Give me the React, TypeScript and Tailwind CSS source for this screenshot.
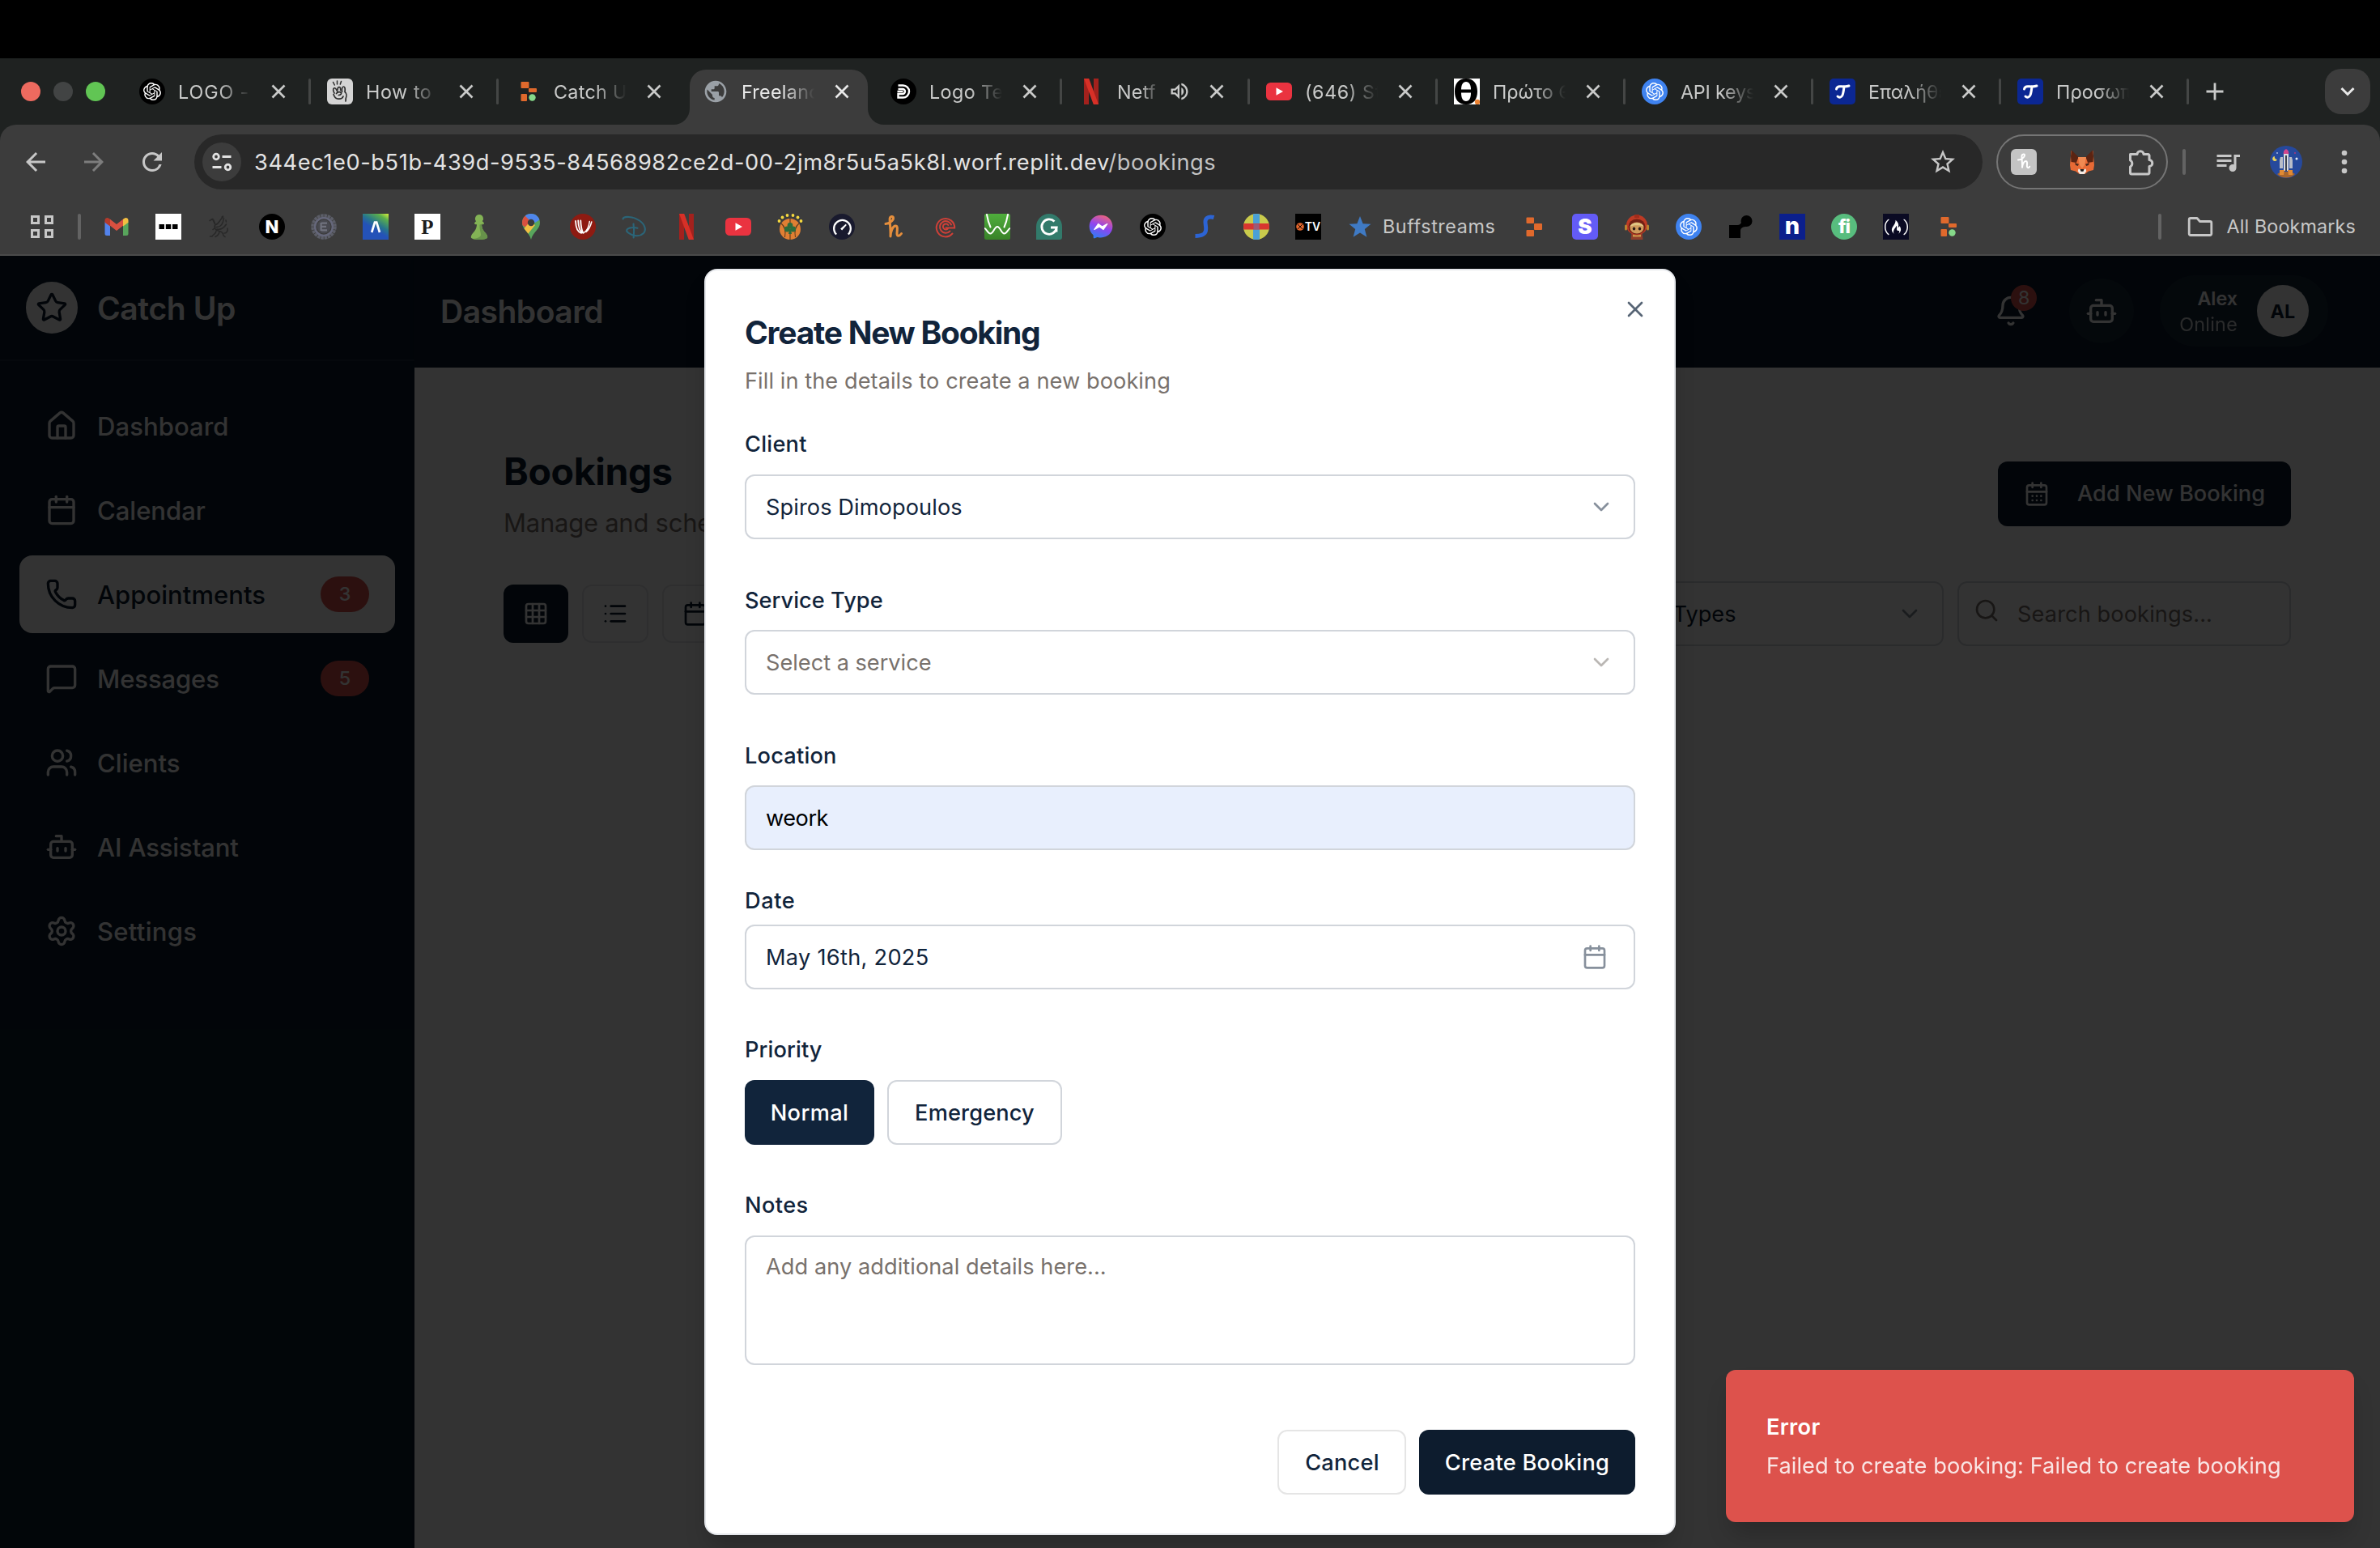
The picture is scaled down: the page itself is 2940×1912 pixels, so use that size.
import React from "react";
import {
  SiOpenai,
  SiSpeedtest,
  SiFreecodecamp,
} from "react-icons/si";
import {
  MdArrowBack,
  MdArrowForward,
  MdRefresh,
  MdStarBorder,
  MdQueueMusic,
  MdPublic,
  MdOutlineVolumeUp,
} from "react-icons/md";
import {
  Bell,
  Bot,
  Calendar,
  CalendarDays,
  ChevronDown,
  Grid3x3,
  House,
  List,
  MessageSquare,
  Phone,
  Search,
  Settings,
  Star,
  Users,
  X,
} from "lucide-react";

type Kids = { children?: React.ReactNode };

/* ---------- favicon building blocks ---------- */

const Svg = ({ children }: Kids) => (
  <svg viewBox="0 0 32 32" className="block size-8 shrink-0">
    {children}
  </svg>
);

const OpenAi = ({ blue = false }: { blue?: boolean }) => (
  <span
    className={
      "flex size-8 shrink-0 items-center justify-center rounded-full text-white " +
      (blue ? "bg-[#3f83f0]" : "bg-black")
    }
  >
    <SiOpenai className="size-[22px]" />
  </span>
);

const Hand = () => (
  <Svg>
    <rect width="32" height="32" rx="6" fill="#d4d4d4" />
    <g fill="none" stroke="#2c2c2c" strokeLinecap="round" strokeLinejoin="round">
      <path d="M7.500 4.500l1.800 3.500M12.500 3v4M17.500 3.500l-1.200 3.500" strokeWidth="1.500" />
      <path
        d="M18.500 16.500c-.5-3 0-6.500 2-6.500 1.800 0 2 3 1.500 6.500 2 1.500 2.500 5 1.200 8L23 28M9 18c-1.500-2.500-2-5.500-.2-6.200 1.500-.5 3 2 4.200 4.700M8 19.500c1 3 2.500 5 5 5.500 3 .6 6-.5 7-3"
        strokeWidth="1.700"
      />
      <path d="M13 14c0-2 .8-3.500 2-3.500s1.800 2 1.800 4M11.500 18.500c1.500-2 4.500-2.500 5.800-1.200 1 1.200-.5 3.200-3 3.200" strokeWidth="1.700" />
    </g>
  </Svg>
);

const ReplitAgent = () => (
  <Svg>
    <g fill="#e0692c">
      <rect x="7.500" y="4" width="10" height="8" rx="1" />
      <rect x="17" y="12" width="10" height="5" rx="1" />
      <rect x="7.500" y="19" width="7.500" height="9" rx="1" />
    </g>
    <circle cx="21.500" cy="23.500" r="4.200" fill="#86d98a" />
  </Svg>
);

const Replit = () => (
  <Svg>
    <g fill="#e0692c">
      <rect x="7.500" y="4.500" width="9.500" height="7.500" rx="1" />
      <rect x="17" y="12" width="10" height="8" rx="1" />
      <rect x="7.500" y="20" width="9.500" height="8" rx="1" />
    </g>
  </Svg>
);

const Globe = () => (
  <span className="flex size-8 shrink-0 items-center justify-center text-[#9aa0a6]">
    <MdPublic className="size-[34px]" />
  </span>
);

const DLogo = () => (
  <Svg>
    <circle cx="16" cy="16" r="16" fill="#000" />
    <g fill="none" stroke="#fff" strokeWidth="2.400">
      <path d="M9.500 8.500h6a7.500 7.500 0 0 1 0 15h-6v-4.500h5.500a3 3 0 0 0 0-6h-5.500" />
      <path d="M8.500 16h7" />
    </g>
  </Svg>
);

const Netflix = () => (
  <Svg>
    <path d="M7 0h6v32H7z" fill="#a3211d" />
    <path d="M19 0h6v32h-6z" fill="#a3211d" />
    <path d="M7 0h6.200L25 32h-6.200z" fill="#d73027" />
  </Svg>
);

const YouTube = () => (
  <Svg>
    <rect y="5" width="32" height="22" rx="5.500" fill="#ea3340" />
    <path d="M12.500 11.200l8.500 4.800-8.500 4.800z" fill="#fff" />
  </Svg>
);

const Theta = () => (
  <Svg>
    <rect width="32" height="32" fill="#fff" />
    <path
      fillRule="evenodd"
      d="M15 0C25 0 29 7 29 16s-4 16-14 16S1 25 1 16 5 0 15 0zm0 4c-4 0-6 4-6 9.500h12C21 8 19 4 15 4zm-6 13.500C9 24 11 28 15 28s6-4 6-10.500z"
      fill="#000"
    />
    <circle cx="29" cy="29" r="3.200" fill="#ee8433" />
  </Svg>
);

const TBlue = () => (
  <Svg>
    <rect width="32" height="32" rx="5" fill="#0b2793" />
    <g fill="none" stroke="#fff" strokeWidth="3" strokeLinecap="round">
      <path d="M8.500 13c.5-2.500 2-3.500 5-3.300 4 .3 7 .8 10.500-.7" />
      <path d="M18 10c-.5 4-.8 7.500-2 10.500-1.200 2.800-4 3.500-6 1.500" />
    </g>
  </Svg>
);

const Gmail = () => (
  <Svg>
    <path d="M1.500 9.500L8 14.500V27H4a2.500 2.500 0 0 1-2.500-2.500z" fill="#5383ec" />
    <path d="M30.500 9.500L24 14.500V27h4a2.500 2.500 0 0 0 2.500-2.500z" fill="#58a55c" />
    <path d="M8 6.800l8 6.200 8-6.200v8L16 21l-8-6.200z" fill="#d95040" />
    <path d="M24 6.800l1.500-1.100c2.200-1.500 5 0 5 2.500v2.500L24 15.500z" fill="#f2be42" />
    <path d="M8 6.800L6.500 5.700c-2.200-1.500-5 0-5 2.500v2.500L8 15.500z" fill="#b33a2c" />
  </Svg>
);

const ThreeDots = () => (
  <Svg>
    <rect width="32" height="32" fill="#fff" />
    <path d="M4.500 13h6.500v6H4.500zM12.800 13h6.500v6h-6.500zM21 13h6.500v6H21z" fill="#000" />
  </Svg>
);

const Griffin = () => (
  <Svg>
    <g fill="none" stroke="#282828" strokeWidth="1.500" strokeLinecap="round" strokeLinejoin="round">
      <path d="M3 8.500l3.500-2c2.500 1.500 2 4 3.500 7M6.500 6.500l2.500 5.500M10 13.500c4.500-.5 5-6 9.500-9.500M11 16.500c5.500.5 8.500-4 9.500-11M12 19c5 1 9-2 11.500-6M10 13.500c-2.500 4 0 6.500 3.500 7.500 4 1 6 2 6.500 6l2 1.500M11 21.500c0 3-3 3.500-5 6.500H3.500M15 22.500c-.5 2.500-2 4.500-5 6M21 24c3 0 4.500-2.500 4-6M7 19.500l2.500-2" />
      <path d="M18 4l1.500-1M23 8l.5 2" />
    </g>
  </Svg>
);

const Coin = () => (
  <Svg>
    <circle cx="16" cy="16" r="14" fill="none" stroke="#5c5e68" strokeWidth="3.500" strokeDasharray="3.600 0.800" />
    <circle cx="16" cy="16" r="11" fill="none" stroke="#65677a" strokeWidth="2.600" />
    <circle cx="16" cy="16" r="8.500" fill="#484950" />
    <path d="M13 10.500h7v2.200h-7zM12 14.800h7v2.200h-7zM13 19.200h7v2.200h-7zM11.500 11h2.200v10h-2.200z" fill="#70727e" />
  </Svg>
);

const Lambda = () => (
  <Svg>
    <defs>
      <linearGradient id="lambda-bg" x1="1" y1="0" x2="0.500" y2="0.800">
        <stop offset="0" stopColor="#d9ee3c" />
        <stop offset="0.250" stopColor="#5bae4c" />
        <stop offset="0.600" stopColor="#27768c" />
        <stop offset="0.850" stopColor="#2452b8" />
      </linearGradient>
    </defs>
    <rect width="32" height="32" fill="url(#lambda-bg)" />
    <path d="M11.200 23L15 10.500h2.200L21 23" fill="none" stroke="#fff" strokeWidth="2.700" />
  </Svg>
);

const PSquare = () => (
  <span className="flex size-8 shrink-0 items-center justify-center bg-white font-['Liberation_Serif'] text-[25px] leading-none font-bold text-[#1c1c1c]">
    P
  </span>
);

const NCircle = () => (
  <span className="flex size-8 shrink-0 items-center justify-center rounded-full bg-black text-[22px] leading-none font-extrabold text-white">
    N
  </span>
);

const Pawn = () => (
  <Svg>
    <path
      d="M16 1a5 5 0 0 1 3.800 8.300c1 .7 2 1.500 2.200 2.800 0 1-1.500 1.200-3 1.200.3 5 2 7.500 4.500 10.200 2 2.200 2.700 4 2.700 5.500 0 2-5 3-10.200 3S5.800 31 5.800 29c0-1.500.7-3.300 2.700-5.500 2.500-2.700 4.200-5.200 4.500-10.200-1.500 0-3-.2-3-1.200.2-1.300 1.200-2.100 2.200-2.800A5 5 0 0 1 16 1z"
      fill="#83b355"
    />
    <path
      d="M22 12c-.5.900-1.500 1.300-3 1.300.3 5 2 7.500 4.500 10.200 2 2.200 2.700 4 2.700 5.500 0 2-5 3-10.200 3-3 0-6-.3-8-1 5-.5 10-2 10-5 0-3-2-7-1.500-12.500z"
      fill="#67924a"
    />
  </Svg>
);

const MapsPin = () => (
  <Svg>
    <defs>
      <clipPath id="pin">
        <path d="M16 0c6.200 0 11 4.800 11 11 0 8.500-8.500 11-11 21-2.500-10-11-12.500-11-21C5 4.800 9.800 0 16 0z" />
      </clipPath>
    </defs>
    <g clipPath="url(#pin)">
      <rect width="32" height="32" fill="#58a55c" />
      <path d="M2 2l7-1 7 9-6 7L3 13z" fill="#d95040" />
      <path d="M6 20l9-11 6 5-9 11z" fill="#f2be42" />
      <path d="M8 0h24v4l-11 7-8-4-4-4z" fill="#4f86ec" />
    </g>
    <circle cx="16" cy="11" r="4.200" fill="#3b3b3b" />
  </Svg>
);

const RedW = () => (
  <Svg>
    <circle cx="16" cy="16" r="16" fill="#8e1b12" />
    <g fill="none" stroke="#fff" strokeWidth="1.800" strokeLinecap="round">
      <path d="M7 9c.3 7 2 13.500 7 14.800M10.200 8.500c.3 6.500 1.500 12.500 5 15M13.300 8.500c.2 5.500.8 10.500 2.700 14.500" />
      <path d="M16.500 24c4.500-2.500 7-8 7.800-14.500M20 22.500c3-2.500 5.500-7 6.800-12.500" strokeWidth="1.500" />
    </g>
  </Svg>
);

const Disney = () => (
  <Svg>
    <g fill="none" stroke="#2b6578" strokeWidth="2.100" strokeLinecap="round">
      <path d="M1.500 6.500C2 2.500 14 3 22 8.500c7 5 8.500 11.500 5 15.500-3.500 3.500-9.500 4-14.500 2-4-1.700-7.500-4-6-6.500 1.700-2.500 8-3 13-1.800" />
      <path d="M14.500 12.500c.8 5 .8 11 .2 17" />
    </g>
  </Svg>
);

const Basketball = () => (
  <Svg>
    <circle cx="16" cy="19" r="13" fill="#e07f33" />
    <g fill="none" stroke="#5d3a1c" strokeWidth="1.100">
      <path d="M16 6v26M5 12c5 4 6 9 4.500 17M27 12c-5 4-6 9-4.500 17" />
    </g>
    <g fill="#2c6b3c">
      <circle cx="16" cy="14.500" r="3.400" />
      <circle cx="12.300" cy="19" r="3.400" />
      <circle cx="19.700" cy="19" r="3.400" />
      <path d="M15 19h2l1 6h-4z" />
    </g>
    <g fill="#f4d83f">
      <circle cx="2.500" cy="9" r="1.900" />
      <circle cx="6.500" cy="4.500" r="1.900" />
      <circle cx="12.500" cy="2" r="1.900" />
      <circle cx="19.500" cy="2" r="1.900" />
      <circle cx="25.500" cy="4.500" r="1.900" />
      <circle cx="29.500" cy="9" r="1.900" />
    </g>
  </Svg>
);

const Speedtest = () => (
  <span className="flex size-8 shrink-0 items-center justify-center rounded-full bg-[#191a2e] text-white">
    <SiSpeedtest className="size-[23px]" />
  </span>
);

const HoneyH = () => (
  <Svg>
    <path
      d="M6 12.500c4.500-.5 10-4 9.500-7.500-.4-2.300-4-2-4.300 1C10.800 10 12.500 20 12 28c0-5 2.500-13 6.200-13s1.600 6.500 1.800 10c.2 3 3 3.200 5.500-.5"
      fill="none"
      stroke="#e58e3c"
      strokeWidth="3"
      strokeLinecap="round"
      strokeLinejoin="round"
    />
  </Svg>
);

const RedSpiral = () => (
  <Svg>
    <g fill="none" stroke="#cf4038" strokeWidth="2" strokeLinecap="round">
      <path d="M24.500 24.500A11.200 11.200 0 1 1 27.200 17.500H16.500" />
      <path d="M21.500 21.500A7.300 7.300 0 1 1 23 13.500" />
      <path d="M18.800 18.500A3.500 3.500 0 1 1 19.300 14" />
    </g>
  </Svg>
);

const GreenW = () => (
  <Svg>
    <defs>
      <linearGradient id="green-w" x1="0" y1="0" x2="0" y2="1">
        <stop offset="0" stopColor="#4fae3c" />
        <stop offset="1" stopColor="#388228" />
      </linearGradient>
    </defs>
    <rect width="32" height="32" rx="2.500" fill="url(#green-w)" />
    <g fill="none" stroke="#fff" strokeWidth="2" strokeLinecap="round" strokeLinejoin="round">
      <path d="M3 1c1 6 2.500 11 4.500 15.500M29 1c-1 6-2.500 11-4.500 15.500" />
      <path d="M0 18c2.500 0 4 6.500 7.500 6.500S12.500 16 16 16s5 8.500 8.500 8.500S29.500 18 32 18" />
    </g>
  </Svg>
);

const Grammarly = () => (
  <Svg>
    <path d="M16 0a16 16 0 0 1 16 16v13a3 3 0 0 1-3 3H0V16A16 16 0 0 1 16 0z" fill="#327a6b" />
    <path d="M22.500 9.500A9.200 9.200 0 1 0 25.200 17H18M25 17v5.500" fill="none" stroke="#fff" strokeWidth="2.800" />
  </Svg>
);

const Messenger = () => (
  <svg viewBox="0 0 24 24" className="block size-8 shrink-0 p-px">
    <defs>
      <linearGradient id="msgr" x1="0.300" y1="1" x2="0.700" y2="0">
        <stop offset="0" stopColor="#2f7df6" />
        <stop offset="0.500" stopColor="#9044f0" />
        <stop offset="1" stopColor="#f0657a" />
      </linearGradient>
    </defs>
    <path
      d="M12 0.500C5.400.5.500 5.300.500 11.700c0 3.300 1.400 6.200 3.700 8.200.2.200.3.400.3.600v2.100c.1.700.8 1.100 1.400.8l2.300-1c.2-.1.400-.1.600-.1 1 .3 2.100.4 3.200.4 6.600 0 11.500-4.800 11.500-11.100S18.600.5 12 .5z"
      fill="url(#msgr)"
    />
    <path d="M5.500 14.700l3.800-5.500 3.900 2.900 5-2.800-3.800 5.500-3.900-2.900z" fill="#fff" stroke="#fff" strokeLinejoin="round" />
  </svg>
);

const BlueS = () => (
  <Svg>
    <path
      d="M27.500 4.500c-5-1.500-10 0-10.500 4.500-.4 4 1.500 8 .5 12-.8 3.500-4.500 6.500-13 6.500"
      fill="none"
      stroke="#2c64d4"
      strokeWidth="5"
    />
  </Svg>
);

const StripeBall = () => (
  <Svg>
    <defs>
      <clipPath id="ball">
        <circle cx="16" cy="16" r="16" />
      </clipPath>
    </defs>
    <g clipPath="url(#ball)">
      <rect width="32" height="32" fill="#c9cb4c" />
      <rect x="12" width="8" height="32" fill="#4aa0d6" />
      <rect y="12" width="32" height="7.500" fill="#d8362f" />
      <rect x="12.500" y="12.500" width="7" height="6.500" fill="#9b5a78" />
    </g>
  </Svg>
);

const EuroTv = () => (
  <span className="flex size-8 shrink-0 items-center justify-center gap-px bg-black text-[14px] leading-none font-semibold text-white">
    <svg viewBox="0 0 10 12" className="h-3 w-[10px]">
      <circle cx="5" cy="6" r="4.800" fill="#e0652c" />
      <path d="M2 3l6 6M8 3L2 9" stroke="#000" strokeWidth="0.900" />
    </svg>
    TV
  </span>
);

const Buff = () => (
  <Svg>
    <path
      d="M16 3l3.600 9.300 9.900.5-7.700 6.300 2.600 9.700L16 23.400l-8.400 5.400 2.600-9.700-7.700-6.300 9.900-.5z"
      fill="#3f7ac4"
    />
  </Svg>
);

const StripeS = () => (
  <span className="flex size-8 shrink-0 items-center justify-center rounded-[5px] bg-[#635bf6] text-[26px] leading-none font-black text-white">
    S
  </span>
);

const Astronaut = () => (
  <Svg>
    <path d="M8.500 32l1-9h13l1 9z" fill="#8f3d2a" />
    <path d="M11 25.500h10v3H11z" fill="#c9964a" />
    <ellipse cx="16" cy="14" rx="13" ry="12.500" fill="#bd3a24" />
    <ellipse cx="16" cy="16" rx="10.500" ry="9.500" fill="#702014" />
    <ellipse cx="16" cy="17.500" rx="8.500" ry="7" fill="#cf9a5c" />
    <path d="M7.500 16c1-6.500 16-6.500 17 0-4-2.500-13-2.500-17 0z" fill="#e2c785" />
    <ellipse cx="12.500" cy="18.500" rx="1.700" ry="2.100" fill="#2b1a14" />
    <ellipse cx="19.500" cy="18.500" rx="1.700" ry="2.100" fill="#2b1a14" />
    <path d="M13 1h6v4h-6z" fill="#a12c1b" />
    <rect x="1" y="13.500" width="3" height="7" rx="1.500" fill="#b9822f" />
    <rect x="28" y="13.500" width="3" height="7" rx="1.500" fill="#b9822f" />
  </Svg>
);

const BlackShape = () => (
  <Svg>
    <circle cx="23.500" cy="9" r="7" fill="#000" />
    <path d="M2 14h10c3 0 5-2 6-5l5 7c-3 0-7 1-7 5v9H2z" fill="#000" />
  </Svg>
);

const NSquare = () => (
  <span className="flex size-8 shrink-0 items-center justify-center bg-[#0b1f8c] pb-1 text-[29px] leading-none font-extrabold text-white">
    n
  </span>
);

const Fiverr = () => (
  <span className="flex size-8 shrink-0 items-center justify-center rounded-full bg-[#58bd7e] text-[23px] leading-none font-extrabold tracking-[-1px] text-white">
    fi
  </span>
);

const FreeCode = () => (
  <span className="flex size-8 shrink-0 items-center justify-center bg-[#0a0a23] text-white">
    <SiFreecodecamp className="size-[29px]" />
  </span>
);

const bookmarks: React.ComponentType[] = [
  Gmail, ThreeDots, Griffin, NCircle, Coin, Lambda, PSquare, Pawn, MapsPin, RedW, Disney, Netflix,
  YouTube, Basketball, Speedtest, HoneyH, RedSpiral, GreenW, Grammarly, Messenger, OpenAi, BlueS,
  StripeBall, EuroTv,
];

/* ---------- browser chrome ---------- */

const CloseX = ({ active = false }: { active?: boolean }) => (
  <svg viewBox="0 0 24 24" className={"size-6 shrink-0 " + (active ? "text-[#e8e8e8]" : "text-[#c9cac9]")}>
    <path d="M4.500 4.500l15 15M19.500 4.500l-15 15" stroke="currentColor" strokeWidth="2.700" />
  </svg>
);

const tabs: { title: string; icon: React.ReactNode; audio?: boolean; active?: boolean; noSep?: boolean; track: string }[] = [
  { title: "LOGO -", icon: <OpenAi />, track: "tracking-[0.900px]" },
  { title: "How to T", icon: <Hand />, track: "tracking-[0.600px]" },
  { title: "Catch U", icon: <ReplitAgent />, noSep: true, track: "tracking-[0.300px]" },
  { title: "Freelanc", icon: <Globe />, active: true, noSep: true, track: "tracking-[0.300px]" },
  { title: "Logo Te", icon: <DLogo />, track: "tracking-[0.400px]" },
  { title: "Netf", icon: <Netflix />, audio: true, track: "tracking-[0.300px]" },
  { title: "(646) St", icon: <YouTube />, track: "tracking-[0.600px]" },
  { title: "Πρώτο Θ", icon: <Theta />, track: "tracking-normal" },
  { title: "API keys", icon: <OpenAi blue />, track: "tracking-[-0.200px]" },
  { title: "Επαλήθε", icon: <TBlue />, track: "tracking-normal" },
  { title: "Προσωπ", icon: <TBlue />, track: "tracking-[0.100px]" },
];

const TabStrip = () => (
  <div className="flex h-[82px] shrink-0 items-center bg-[#1f2221]">
    <div className="flex w-[152px] shrink-0 gap-4 pl-[26px]">
      <span className="size-6 rounded-full bg-[#ed6a5f]" />
      <span className="size-6 rounded-full bg-[#424444]" />
      <span className="size-6 rounded-full bg-[#61c554]" />
    </div>
    {tabs.map((t, i) => (
      <div key={i} className="relative flex h-[82px] w-[232px] shrink-0 items-center pl-5">
        {t.active && (
          <svg viewBox="0 0 260 68" className="absolute top-[14px] -left-4 h-[68px] w-[260px]">
            <path d="M0 68a20 20 0 0 0 20-20V20A20 20 0 0 1 40 0h180a20 20 0 0 1 20 20v28a20 20 0 0 0 20 20z" fill="#3c3c3c" />
          </svg>
        )}
        <div className="relative flex items-center">
          {t.icon}
          <span
            className={
              "ml-4 pt-0.5 text-[23.300px] leading-8 whitespace-nowrap [mask-image:linear-gradient(to_right,#000_55%,transparent_98%)] " +
              (t.audio ? "mr-3 w-[54px] " : "w-[92px] ") +
              (t.active ? "text-[#e8e8e8] " : "text-[#c9cac9] ") +
              t.track
            }
          >
            {t.title}
          </span>
          {t.audio && <MdOutlineVolumeUp className="-ml-[3px] size-7 text-[#c9cac9]" />}
        </div>
        <span className="relative ml-5 flex">
          <CloseX active={t.active} />
        </span>
        {!t.noSep && <span className="absolute right-0 h-8 w-[3px] rounded bg-[#444645]" />}
      </div>
    ))}
    <svg viewBox="0 0 24 24" className="ml-5 size-6 text-[#c9cac9]">
      <path d="M12 1.500v21M1.500 12h21" stroke="currentColor" strokeWidth="2.800" />
    </svg>
    <div className="mr-3 ml-auto flex h-14 w-14 items-center justify-center rounded-[20px] bg-[#3c3c3c]">
      <svg viewBox="0 0 20 20" className="size-5">
        <path d="M2.500 6l7.500 7.500L17.500 6" fill="none" stroke="#e8e8e8" strokeWidth="3" />
      </svg>
    </div>
  </div>
);

const UrlRow = () => (
  <div className="flex h-[68px] items-center text-[#c7c7c7]">
    <MdArrowBack className="ml-[26px] size-9" />
    <MdArrowForward className="ml-9 size-9 text-[#7d7d7d]" />
    <MdRefresh className="ml-9 size-9" />
    <div className="ml-[34px] flex h-[68px] w-[2209px] items-center rounded-full bg-[#282828] pr-[31px] pl-[10px]">
      <span className="flex size-12 items-center justify-center rounded-full bg-[#3c3c3c]">
        <svg viewBox="0 0 28 28" className="size-7">
          <g fill="none" stroke="#e2e2e2" strokeWidth="2.800">
            <circle cx="7" cy="7.500" r="3.300" />
            <path d="M14.500 7.500H25.500M2.500 20.500H13.500" />
            <circle cx="21.500" cy="20.500" r="3.300" />
          </g>
        </svg>
      </span>
      <span className="ml-4 pt-0.5 text-[27.200px] leading-10 tracking-[0.600px] whitespace-nowrap text-[#e3e3e3]">
        344ec1e0-b51b-439d-9535-84568982ce2d-00-2jm8r5u5a5k8l.worf.replit.dev
        <span className="text-[#c4c4c4]">/bookings</span>
      </span>
      <MdStarBorder className="ml-auto size-9" />
    </div>
    <div className="ml-[17px] flex h-[68px] w-[212px] items-center rounded-full border-2 border-[#757575] pl-4">
      <Svg>
        <rect width="32" height="32" rx="6" fill="#c4c4c4" />
        <path
          d="M9 13.500c3 0 8-2.500 8-5.800 0-1.900-3-1.700-3.400.3-.6 3 .9 9.500.4 15.500 0-4 2-8.500 4.500-8.500s1.200 4.500 1.400 6.500c.2 2 2 2.500 3.300.2"
          fill="none"
          stroke="#fff"
          strokeWidth="2"
          strokeLinecap="round"
        />
      </Svg>
      <svg viewBox="0 0 32 32" className="ml-10 size-8">
        <path d="M2.500 2l7.500 8.500h12L29.500 2 31 20l-1 6-6 1.500L19.500 31h-7L8 27.500 2 26l-1-6z" fill="#e86a35" />
        <path d="M3 1.500l8.500 8.500L9 17l-6.500-1L2 9z M29 1.500L20.500 10 23 17l6.500-1 .5-7z" fill="#5b2412" />
        <path d="M11 10h10l-2 10-3 4-3-4z" fill="#f08a52" />
        <path d="M7 17l5 1.800-1.200 2.200-2.800-1zM25 17l-5 1.800 1.200 2.200 2.800-1z" fill="#4a2a1e" />
        <path d="M11.500 24.500l4.500 1 4.500-1 .8 3-2.500 3.500h-5.600L10.700 27.500z" fill="#f3e9e2" />
        <path d="M13.500 25h5l-1 2.800h-3z" fill="#1d1d1d" />
      </svg>
      <svg viewBox="0 0 36 36" className="ml-[39px] size-9">
        <path
          d="M4.500 8.500h8.500a4 3.800 0 0 1 8 0h5.500a1.500 1.500 0 0 1 1.500 1.500v5.500a3.800 4 0 0 1 0 8v8a1.500 1.500 0 0 1-1.500 1.500H6A1.500 1.500 0 0 1 4.500 31.500v-7.500a4.600 4.600 0 0 0 0-8z"
          fill="none"
          stroke="currentColor"
          strokeWidth="3"
          strokeLinejoin="round"
        />
      </svg>
    </div>
    <span className="ml-[18px] h-8 w-1 rounded bg-[#636363]" />
    <MdQueueMusic className="ml-[34px] size-9" />
    <svg viewBox="0 0 40 40" className="ml-[34px] size-10">
      <circle cx="20" cy="20" r="20" fill="#26499c" />
      <path d="M9 35c4-4 18-4 22 0-5 6-17 6-22 0z" fill="#a8662c" />
      <path d="M17 8c1-3 5-3 6 0v23h-6z" fill="#d9dbe0" />
      <path d="M17 8c1-5 5-5 6 0l.5 2h-7z" fill="#d2458c" />
      <path d="M16 14h-3l-1 4v10h4zM24 14h3l1 4v10h-4z" fill="#b9bdc8" />
      <path d="M19 12h2v19h-2z" fill="#3d4352" />
      <path d="M12 30h6l-1 6h-5zM22 30h6v6h-5z" fill="#e08a34" />
      <circle cx="33" cy="16" r="1.500" fill="#e6edf8" />
      <path d="M6 13a3 3 0 1 0 3 4 3 3 0 0 1-3-4z" fill="#ecd45a" />
      <circle cx="31" cy="9" r="1" fill="#b13a7b" />
      <circle cx="9" cy="9" r="0.900" fill="#b9c8ea" />
    </svg>
    <svg viewBox="0 0 32 32" className="ml-9 size-8">
      <g fill="currentColor">
        <circle cx="16" cy="5" r="3.300" />
        <circle cx="16" cy="16" r="3.300" />
        <circle cx="16" cy="27" r="3.300" />
      </g>
    </svg>
  </div>
);

const BookmarksRow = () => (
  <div className="mt-3 flex h-[68px] items-center gap-8 pr-[30px] pl-9 text-[23.300px] leading-8 text-[#c7c7c7]">
    <div className="-mr-1 flex items-center gap-7">
      <svg viewBox="0 0 32 32" className="size-8">
        <path
          d="M3.500 3.500h8v8h-8zM20.500 3.500h8v8h-8zM3.500 20.500h8v8h-8zM20.500 20.500h8v8h-8z"
          fill="none"
          stroke="currentColor"
          strokeWidth="3"
        />
      </svg>
      <span className="h-8 w-1 rounded bg-[#636363]" />
    </div>
    {bookmarks.map((Icon, i) => (
      <Icon key={i} />
    ))}
    <div className="flex w-[182px] items-center gap-3">
      <Buff />
      <span className="tracking-[0.600px]">Buffstreams</span>
    </div>
    <Replit />
    <StripeS />
    <Astronaut />
    <OpenAi blue />
    <BlackShape />
    <NSquare />
    <Fiverr />
    <FreeCode />
    <ReplitAgent />
    <span className="ml-auto h-8 w-1 rounded bg-[#636363]" />
    <div className="flex items-center gap-4">
      <svg viewBox="0 0 32 32" className="size-8">
        <path
          d="M4 5.500h8l3.500 4H28A1.800 1.800 0 0 1 29.800 11.300v13.400A1.800 1.800 0 0 1 28 26.500H4A1.800 1.800 0 0 1 2.200 24.700V7.300A1.800 1.800 0 0 1 4 5.500z"
          fill="none"
          stroke="currentColor"
          strokeWidth="2.800"
          strokeLinejoin="round"
        />
      </svg>
      <span className="tracking-[0.150px] whitespace-nowrap">All Bookmarks</span>
    </div>
  </div>
);

/* ---------- application ---------- */

const nav = [
  { label: "Dashboard", icon: House, track: "tracking-[0.100px]" },
  { label: "Calendar", icon: Calendar, track: "tracking-[0.000px]" },
  { label: "Appointments", icon: Phone, badge: "3", active: true, track: "tracking-[0.050px]" },
  { label: "Messages", icon: MessageSquare, badge: "5", track: "tracking-[-0.100px]" },
  { label: "Clients", icon: Users, track: "tracking-[0.050px]" },
  { label: "AI Assistant", icon: Bot, track: "tracking-[-0.100px]" },
  { label: "Settings", icon: Settings, track: "tracking-[0.300px]" },
];

const Sidebar = () => (
  <aside className="flex w-[512px] shrink-0 flex-col bg-[#0a1c2e] text-white">
    <div className="flex h-[130px] items-center gap-6 border-b-2 border-white/[0.07] px-8">
      <span className="flex size-16 items-center justify-center rounded-full bg-white">
        <Star className="size-10 text-[#0a1c2e]" />
      </span>
      <span className="pt-0.5 text-[39px] leading-[56px] font-semibold tracking-[-0.380px]">Catch Up</span>
    </div>
    <nav className="flex flex-col gap-2 px-6 pt-8">
      {nav.map(({ label, icon: Icon, badge, active, track }) => (
        <div
          key={label}
          className={
            "flex h-24 items-center gap-6 rounded-2xl px-8 " + (active ? "bg-white text-[#0a1c2e]" : "text-white")
          }
        >
          <Icon className="size-10" />
          <span className={"pt-0.5 text-[31px] leading-[48px] font-medium " + track}>{label}</span>
          {badge && (
            <span className="ml-auto flex h-11 w-[60px] items-center justify-center rounded-full bg-[#dd524c] text-[23.300px] leading-8 font-medium text-white">
              {badge}
            </span>
          )}
        </div>
      ))}
    </nav>
  </aside>
);

const Header = () => (
  <header className="flex h-[138px] shrink-0 items-center bg-[#0a1c2e] pr-16 pl-8 text-white shadow-md">
    <h1 className="text-[39px] leading-[56px] font-semibold tracking-[-0.500px]">Dashboard</h1>
    <div className="-mt-[2px] ml-auto flex items-center gap-8">
      <div className="relative flex size-20 items-center justify-center">
        <Bell className="size-10" />
        <span className="absolute top-2 right-2 flex size-8 items-center justify-center rounded-full bg-[#dd524c] text-[23.300px] leading-8">
          8
        </span>
      </div>
      <div className="flex size-20 items-center justify-center rounded-full bg-white/[0.06]">
        <Bot className="size-10" />
      </div>
      <div className="flex h-[88px] items-center gap-6 rounded-full bg-white/[0.06] px-6">
        <div className="pt-0.5 text-right text-[23.300px] leading-8">
          <div className="font-semibold">Alex</div>
          <div className="tracking-[0.270px] opacity-80">Online</div>
        </div>
        <span className="flex size-16 items-center justify-center rounded-full bg-white pt-0.5 text-[23.300px] font-bold tracking-[0.300px] text-[#0a1c2e]">
          AL
        </span>
      </div>
    </div>
  </header>
);

const Content = () => (
  <main className="flex-1 bg-white pt-24 pr-[110px] pl-[110px] text-[27.200px] text-[#0a1c2e]">
    <div className="flex items-center justify-between">
      <div>
        <h2 className="text-[46.500px] leading-[64px] font-bold tracking-[-0.390px]">Bookings</h2>
        <p className="mt-2 text-[31px] leading-[48px] tracking-[-0.250px] whitespace-nowrap text-[#78716c]">
          Manage and schedule
        </p>
      </div>
      <div className="flex h-20 w-[362px] items-center gap-[34px] rounded-xl bg-[#0a1c2e] pl-8 font-medium text-white">
        <CalendarDays className="size-8" />
        <span className="tracking-[0.020px] whitespace-nowrap">Add New Booking</span>
      </div>
    </div>
    <div className="mt-12 flex items-center gap-[17px]">
      <div className="flex h-[72px] w-20 items-center justify-center rounded-xl bg-[#0a1c2e] text-white">
        <Grid3x3 className="size-8" />
      </div>
      <div className="flex h-[72px] w-[82px] items-center justify-center rounded-xl border-2 border-[#e5e7eb]">
        <List className="size-8" />
      </div>
      <div className="flex h-[72px] w-[82px] items-center justify-center rounded-xl border-2 border-[#e5e7eb]">
        <Calendar className="size-8" />
      </div>
      <div className="ml-auto flex h-20 w-[400px] items-center justify-between rounded-xl border-2 border-[#d1d5db] px-6">
        <span className="pt-0.5">All Types</span>
        <ChevronDown className="size-8 opacity-50" />
      </div>
      <div className="flex h-20 w-[412px] items-center rounded-xl border-2 border-[#d1d5db] pl-[18px] text-[#78716c]">
        <Search className="-mt-2 size-8" />
        <span className="ml-[22px] pt-0.5 tracking-[0.100px]">Search bookings...</span>
      </div>
    </div>
  </main>
);

const Label = ({ children, mt, track }: Kids & { mt: string; track: string }) => (
  <div className={"h-10 leading-[42px] font-medium " + mt + " " + track}>{children}</div>
);

const field = "flex h-20 items-center rounded-xl border-2 border-[#d1d5db] pl-6 ";

const Modal = () => (
  <div className="absolute top-4 left-[870px] h-[1564px] w-[1200px] rounded-2xl border-2 border-[#e5e7eb] bg-white px-12 pt-[57px] text-[27.200px] leading-10 text-[#11243b] shadow-[0_20px_30px_-6px_rgba(0,0,0,0.2)]">
    <h3 className="text-[39px] leading-10 font-bold tracking-[-1.250px]">Create New Booking</h3>
    <p className="mt-[19px] h-10 leading-[42px] tracking-[0.060px] text-[#78716c]">
      Fill in the details to create a new booking
    </p>

    <Label mt="mt-[38px]" track="tracking-[0.250px]">Client</Label>
    <div className={field + "mt-[18px] justify-between pr-6"}>
      <span className="pt-0.5 tracking-[0.080px]">Spiros Dimopoulos</span>
      <ChevronDown className="size-8 opacity-50" />
    </div>

    <Label mt="mt-[55px]" track="tracking-[0.030px]">Service Type</Label>
    <div className={field + "mt-[17px] justify-between pr-6 text-[#78716c]"}>
      <span className="pt-0.5 tracking-[-0.020px]">Select a service</span>
      <ChevronDown className="size-8 opacity-50" />
    </div>

    <Label mt="mt-[55px]" track="tracking-[0.200px]">Location</Label>
    <div className={field + "mt-[17px] bg-[#e8effd] text-black"}>
      <span className="pt-0.5 tracking-[-0.500px]">weork</span>
    </div>

    <Label mt="mt-[42px]" track="tracking-[0.600px]">Date</Label>
    <div className={field + "mt-[10px] justify-between pr-8"}>
      <span className="pt-0.5 tracking-[0.280px]">May 16th, 2025</span>
      <Calendar className="size-8 opacity-50" />
    </div>

    <Label mt="mt-[54px]" track="tracking-[0.100px]">Priority</Label>
    <div className="mt-[18px] flex gap-4 font-medium">
      <div className="flex h-20 w-40 items-center justify-center rounded-xl bg-[#11243b] pt-0.5 tracking-[0.400px] text-white">
        Normal
      </div>
      <div className="flex h-20 w-[216px] items-center justify-center rounded-xl border-2 border-[#d1d5db] pt-0.5 tracking-[0.140px]">
        Emergency
      </div>
    </div>

    <Label mt="mt-[54px]" track="tracking-[0.400px]">Notes</Label>
    <div className="mt-[18px] h-40 rounded-xl border-2 border-[#d1d5db] pt-[17px] pl-6 tracking-[0.050px] text-[#78716c]">
      Add any additional details here...
    </div>

    <div className="mt-20 flex justify-end gap-4 font-medium">
      <div className="flex h-20 w-[159px] items-center justify-center rounded-xl border-2 border-[#e5e5e5] pt-0.5 pl-px tracking-[0.250px]">
        Cancel
      </div>
      <div className="flex h-20 w-[267px] items-center justify-center rounded-xl bg-[#0d1c2e] pt-0.5 tracking-[0.250px] text-white">
        Create Booking
      </div>
    </div>

    <X className="absolute top-8 right-8 size-8 opacity-70" />
  </div>
);

const Toast = () => (
  <div className="absolute right-8 bottom-8 h-[188px] w-[776px] rounded-xl bg-[#dd524c] pt-[51px] pl-[50px] text-[27.200px] leading-10 text-white shadow-[0_20px_30px_-6px_rgba(0,0,0,0.2)]">
    <div className="font-semibold tracking-[0.300px]">Error</div>
    <div className="mt-2 tracking-[0.050px] opacity-85">Failed to create booking: Failed to create booking</div>
  </div>
);

export default function App() {
  return (
    <div className="flex h-[1912px] w-[2940px] flex-col overflow-hidden bg-black font-['Inter',sans-serif]">
      <div className="h-[72px] shrink-0" />
      <TabStrip />
      <div className="shrink-0 bg-[#1f2221]">
        <div className="h-40 rounded-t-[20px] bg-[#3c3c3c] pt-3">
          <UrlRow />
          <BookmarksRow />
        </div>
      </div>
      <div className="h-[2px] shrink-0 bg-[#4a4a4a]" />
      <div className="relative flex flex-1">
        <Sidebar />
        <div className="flex min-w-0 flex-1 flex-col">
          <Header />
          <Content />
        </div>
        <div className="absolute inset-0 bg-black/80" />
        <Modal />
        <Toast />
      </div>
    </div>
  );
}
